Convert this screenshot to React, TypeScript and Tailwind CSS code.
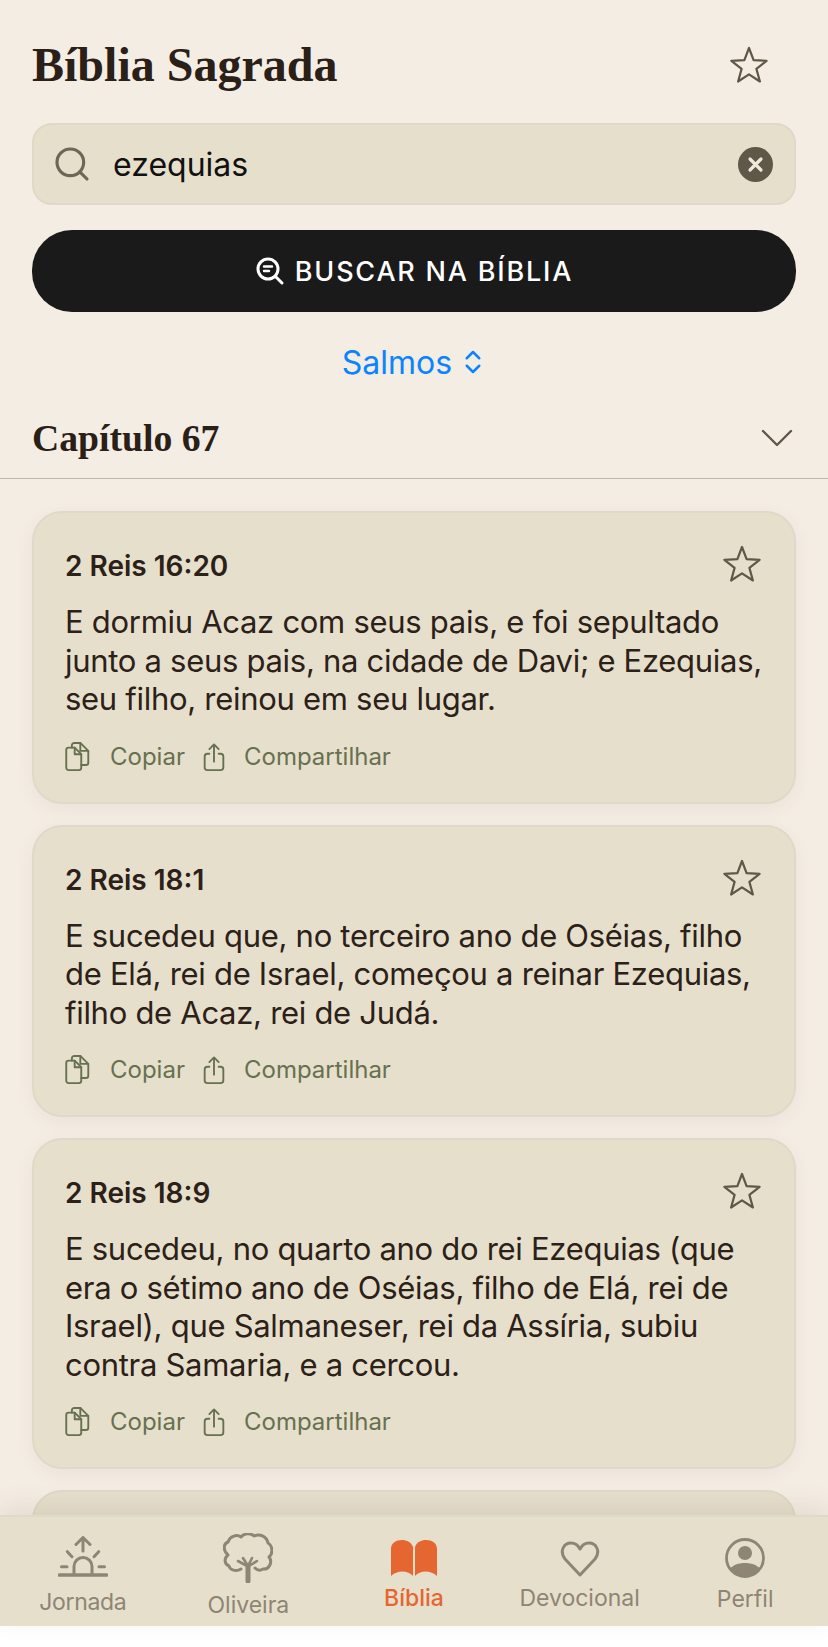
import { Search, ChevronsUpDown } from 'lucide-react';

const VERSES = [
  { ref: '2 Reis 16:20', lines: ['E dormiu Acaz com seus pais, e foi sepultado', 'junto a seus pais, na cidade de Davi; e Ezequias,', 'seu filho, reinou em seu lugar.'] },
  { ref: '2 Reis 18:1', lines: ['E sucedeu que, no terceiro ano de Oséias, filho', 'de Elá, rei de Israel, começou a reinar Ezequias,', 'filho de Acaz, rei de Judá.'] },
  { ref: '2 Reis 18:9', lines: ['E sucedeu, no quarto ano do rei Ezequias (que', 'era o sétimo ano de Oséias, filho de Elá, rei de', 'Israel), que Salmaneser, rei da Assíria, subiu', 'contra Samaria, e a cercou.'] },
];

function Star({ className }: { className: string }) {
  return (
    <svg viewBox="0 0 40 40" fill="none" stroke="currentColor" strokeWidth="2.2" strokeLinejoin="round" className={className}>
      <path d="M20 3 L24.6 15.2 L37.6 15.8 L27.4 23.9 L30.9 36.5 L20 29.3 L9.1 36.5 L12.6 23.9 L2.4 15.8 L15.4 15.2 Z" />
    </svg>
  );
}

function CopyIcon() {
  return (
    <svg viewBox="0 0 26 32" fill="none" stroke="currentColor" strokeWidth="2" strokeLinejoin="round" strokeLinecap="round" className="w-[25px] h-[30px]">
      <path d="M9 6 H3.5 A2.5 2.5 0 0 0 1 8.5 V27.5 A2.5 2.5 0 0 0 3.5 30 H14.5 A2.5 2.5 0 0 0 17 27.5 V13 L10 6 Z" />
      <path d="M10 6 V13 H17" />
      <path d="M7 6 V3.5 A2.5 2.5 0 0 1 9.5 1 H16 L24.5 9.5 V22 A2.5 2.5 0 0 1 22 24.5 H17" />
      <path d="M16 1 V9.5 H24.5" />
    </svg>
  );
}

function ShareIcon() {
  return (
    <svg viewBox="0 0 22 30" fill="none" stroke="currentColor" strokeWidth="2" strokeLinejoin="round" strokeLinecap="round" className="w-[22px] h-[28px]">
      <path d="M6 11.5 H4 A3 3 0 0 0 1 14.5 V26 A3 3 0 0 0 4 29 H18 A3 3 0 0 0 21 26 V14.5 A3 3 0 0 0 18 11.5 H16" />
      <path d="M11 20 V2 M6 6.5 L11 1.5 L16 6.5" />
    </svg>
  );
}

function VerseCard({ verse }: { verse: (typeof VERSES)[number] }) {
  return (
    <div className="bg-[#e6dfcc] border-2 border-[#e0d8c8] rounded-[30px] shadow-[0_5px_18px_rgba(90,70,40,0.06)] pt-[28px] pb-[28px] px-[31px]">
      <div className="flex items-center justify-between h-[46px]">
        <span className="pt-[4px] text-[28px] font-semibold text-[#2c2118]">{verse.ref}</span>
        <Star className="w-[40px] h-[40px] text-[#5f5748] mr-[1px]" />
      </div>
      <div className="mt-[16px] text-[31px] leading-[38.5px] text-[#2c2118] tracking-[-0.29px]">
        {verse.lines.map((l) => (
          <div key={l} className="whitespace-nowrap">{l}</div>
        ))}
      </div>
      <div className="flex items-center mt-[21px] h-[34px] text-[#66714f] text-[24px]">
        <CopyIcon />
        <span className="ml-[20px]">Copiar</span>
        <span className="ml-[18px]"><ShareIcon /></span>
        <span className="ml-[19px]">Compartilhar</span>
      </div>
    </div>
  );
}

function NavItem({ label, icon, active, labelClass }: { label: string; icon: React.ReactNode; active?: boolean; labelClass: string }) {
  return (
    <div className={`flex-1 flex flex-col items-center ${active ? 'text-[#e56631]' : 'text-[#8e8574]'}`}>
      <div className="h-[42px] flex items-end">{icon}</div>
      <span className={`text-[23px] leading-[28px] whitespace-nowrap ${active ? 'font-medium' : ''} ${labelClass}`}>{label}</span>
    </div>
  );
}

export default function App() {
  return (
    <div className="w-[828px] h-[1647px] flex flex-col bg-white overflow-hidden font-['Inter',sans-serif]">
      <div className="flex-1 min-h-0 overflow-hidden bg-[#f4ede4]">
        <div className="px-[32px]">
          <div className="flex items-center justify-between pt-[15px] h-[123px] pb-[8px]">
            <h1 className="font-['Liberation_Serif',serif] font-bold text-[48px] leading-none text-[#2a2018]">Bíblia Sagrada</h1>
            <Star className="w-[40px] h-[40px] text-[#5f5748] mr-[27px]" />
          </div>
          <div className="h-[82px] bg-[#e6dfcc] border-2 border-[#e0d8c8] rounded-[20px] flex items-center pl-[18px] pr-[21px]">
            <Search className="w-[40px] h-[40px] text-[#6e6656]" strokeWidth={1.9} />
            <span className="ml-[21px] pt-[2px] flex-1 text-[32px] text-[#111]">ezequias</span>
            <svg viewBox="0 0 35 35" className="w-[35px] h-[35px]">
              <circle cx="17.5" cy="17.5" r="17.5" fill="#5f5748" />
              <path d="M12 12 L23 23 M23 12 L12 23" stroke="#efe9da" strokeWidth="3.2" strokeLinecap="round" />
            </svg>
          </div>
          <div className="mt-[25px] h-[82px] bg-[#1a1a1a] rounded-[40px] flex items-center justify-center gap-[10px] text-white">
            <svg viewBox="0 0 30 30" fill="none" stroke="currentColor" strokeWidth="3" strokeLinecap="round" className="w-[30px] h-[30px]">
              <circle cx="13" cy="13" r="10" />
              <path d="M21 21 L27 27" />
              <path d="M9 10.5 H17 M9 15 H14" strokeWidth="2.4" />
            </svg>
            <span className="pt-[2px] text-[27px] font-medium tracking-[1.8px]">BUSCAR NA BÍBLIA</span>
          </div>
          <div className="mt-[29px] flex items-center justify-center text-[#0a84ff] h-[42px] pl-[2px]">
            <span className="pt-[1px] text-[32px]">Salmos</span>
            <ChevronsUpDown className="w-[30px] h-[34px] ml-[6px]" strokeWidth={2} />
          </div>
        </div>
        <div className="mt-[33px] h-[63px] border-b border-[#bdb5a8] pl-[32px] pr-[35px] flex items-start justify-between">
          <h2 className="font-['Liberation_Serif',serif] font-bold text-[37.7px] leading-[44px] text-[#2a2018]">Capítulo 67</h2>
          <svg viewBox="0 0 32 18" fill="none" stroke="currentColor" strokeWidth="2.4" strokeLinecap="round" strokeLinejoin="round" className="w-[32px] h-[18px] mt-[13px] text-[#5f5748]">
            <path d="M2 2 L16 16 L30 2" />
          </svg>
        </div>
        <div className="px-[32px] pt-[32px] flex flex-col gap-[21px]">
          {VERSES.map((v) => (
            <VerseCard key={v.ref} verse={v} />
          ))}
          <div className="h-[100px] bg-[#e6dfcc] border-2 border-[#e0d8c8] rounded-[30px] shrink-0" />
        </div>
      </div>
      <nav className="h-[111px] shrink-0 bg-[#e6dfcc] border-t-2 border-[#e0d8c8] shadow-[0_-8px_24px_rgba(90,70,40,0.1)] relative flex pt-[18px]">
        <NavItem
          label="Jornada"
          labelClass="mt-[11px] tracking-[-0.3px]"
          icon={
            <svg viewBox="0 0 50 41" fill="none" stroke="currentColor" strokeWidth="3" strokeLinecap="round" strokeLinejoin="round" className="w-[50px] h-[41px]">
              <path d="M25 15 V2 M18 8.5 L25 1.5 L32 8.5" />
              <path d="M9.3 15.7 L14 20.7 M40.7 15.7 L36 20.7" />
              <path d="M16 37 V30.5 A9 9 0 0 1 34 30.5 V37" />
              <path d="M3.5 30.7 H9 M41 30.7 H46.5" />
              <path d="M1.5 39 H48.5" strokeWidth="3.6" />
            </svg>
          }
        />
        <NavItem
          label="Oliveira"
          labelClass="mt-[14px]"
          icon={
            <svg viewBox="0 0 50 50" fill="none" stroke="currentColor" strokeWidth="3" strokeLinecap="round" strokeLinejoin="round" className="w-[50px] h-[50px] -mb-[6px]">
              <path d="M18 36 C13 39 7 37 6 33 C1 31 1 25 5 22 C0 18 0 11 5 9 C7 3 14 1 18 4 C21 0 28 0 31 3 C37 0 44 4 45 10 C50 13 50 21 46 24 C50 29 46 37 40 36 C37 38 34 37 32 35" />
              <path d="M25 48 V34" strokeWidth="5" />
              <path d="M24 33 L15 28 M25 33 L20 25 M25 33 L29 25 M26 33 L34 28" strokeWidth="2.6" />
            </svg>
          }
        />
        <NavItem
          label="Bíblia"
          active
          labelClass="mt-[7px]"
          icon={
            <svg viewBox="0 0 46 37" fill="currentColor" className="w-[46px] h-[37px]">
              <path d="M22 7 C20 2 16 0 11 0 C5 0 0 3 0 9 V36 C6 30 17 30 22 36 Z" />
              <path d="M24 7 C26 2 30 0 35 0 C41 0 46 3 46 9 V36 C40 30 29 30 24 36 Z" />
            </svg>
          }
        />
        <NavItem
          label="Devocional"
          labelClass="mt-[7px]"
          icon={
            <svg viewBox="0 0 40 36" fill="none" stroke="currentColor" strokeWidth="3" strokeLinejoin="round" className="w-[40px] h-[36px]">
              <path d="M20 34 L5 18 C-1 10 4 2 11 2 C15 2 18 4 20 8 C22 4 25 2 29 2 C36 2 41 10 35 18 Z" />
            </svg>
          }
        />
        <NavItem
          label="Perfil"
          labelClass="mt-[8px]"
          icon={
            <svg viewBox="0 0 40 40" className="w-[40px] h-[40px] -mb-[1px]">
              <circle cx="20" cy="20" r="18.5" fill="none" stroke="currentColor" strokeWidth="2.8" />
              <circle cx="20" cy="15" r="7" fill="currentColor" />
              <path d="M5 31 C10 23 30 23 35 31 A18.5 18.5 0 0 1 5 31 Z" fill="currentColor" />
            </svg>
          }
        />
      </nav>
      <div className="h-[21px] shrink-0 bg-white" />
    </div>
  );
}
